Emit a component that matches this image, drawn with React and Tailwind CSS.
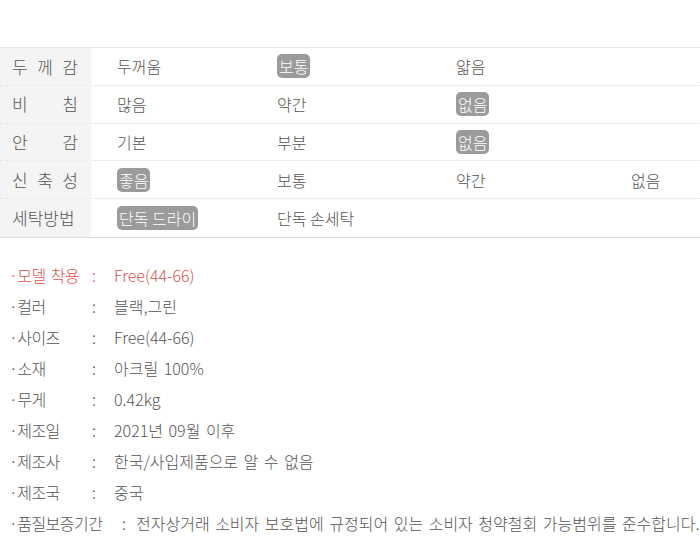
const FONT = { fontFamily: '"Noto Sans CJK KR", "Noto Sans", sans-serif' };

const rows = [
  { label: ['두', '께', '감'], cells: [['두꺼움'], ['보통', true], ['얇음'], null] },
  { label: ['비', '침'], cells: [['많음'], ['약간'], ['없음', true], null] },
  { label: ['안', '감'], cells: [['기본'], ['부분'], ['없음', true], null] },
  { label: ['신', '축', '성'], cells: [['좋음', true], ['보통'], ['약간'], ['없음']] },
  { label: ['세탁방법'], cells: [['단독 드라이', true], ['단독 손세탁'], null, null] },
];

const info = [
  { k: '·모델 착용', v: 'Free(44-66)', red: true },
  { k: '·컬러', v: '블랙,그린' },
  { k: '·사이즈', v: 'Free(44-66)' },
  { k: '·소재', v: '아크릴 100%' },
  { k: '·무게', v: '0.42kg' },
  { k: '·제조일', v: '2021년 09월 이후' },
  { k: '·제조사', v: '한국/사입제품으로 알 수 없음' },
  { k: '·제조국', v: '중국' },
];

function Cell({ cell }) {
  if (!cell) return <div />;
  const [text, on] = cell;
  return (
    <div className="pl-[26px] flex items-center">
      {on ? (
        <span className="bg-[#9b9b9b] text-white rounded-[5px] px-[2px] leading-[24px]">{text}</span>
      ) : (
        <span>{text}</span>
      )}
    </div>
  );
}

export default function App() {
  return (
    <div className="w-[700px] h-[554px] bg-white overflow-hidden font-light" style={FONT}>
      <div className="h-[47px]" />

      {/* 두께감 table */}
      <div className="border-t border-[#e6e6e6] border-b border-b-[#dcdcdc]">
        {rows.map((r, i) => (
          <div
            key={i}
            className={`grid grid-cols-[91px_160px_179px_175px_1fr] h-[37.8px] text-[16px] text-[#555] ${
              i < rows.length - 1 ? 'border-b border-dotted border-[#dedede]' : ''
            }`}
          >
            <div className="bg-[#f4f4f4] flex items-center pl-[12px]">
              <div className="w-[66px] flex justify-between text-[17px] text-[#555]">
                {r.label.map((c, j) => (
                  <span key={j}>{c}</span>
                ))}
              </div>
            </div>
            {r.cells.map((c, j) => (
              <Cell key={j} cell={c} />
            ))}
          </div>
        ))}
      </div>

      {/* 상품 정보 */}
      <div className="mt-[22px] pl-[9px] text-[16px] leading-[31px] text-[#555] [word-spacing:2px]">
        {info.map((it, i) => (
          <div key={i} className={`flex ${it.red ? 'text-[#d9534f]' : ''}`}>
            <span className="w-[83px] tracking-[-0.5px]">{it.k}</span>
            <span>:</span>
            <span className="ml-[18px]">{it.v}</span>
          </div>
        ))}
        <div className="flex whitespace-nowrap">
          <span className="w-[113px] tracking-[-0.5px]">·품질보증기간</span>
          <span>:</span>
          <span className="ml-[10px]">전자상거래 소비자 보호법에 규정되어 있는 소비자 청약철회 가능범위를 준수합니다.</span>
        </div>
      </div>
    </div>
  );
}
